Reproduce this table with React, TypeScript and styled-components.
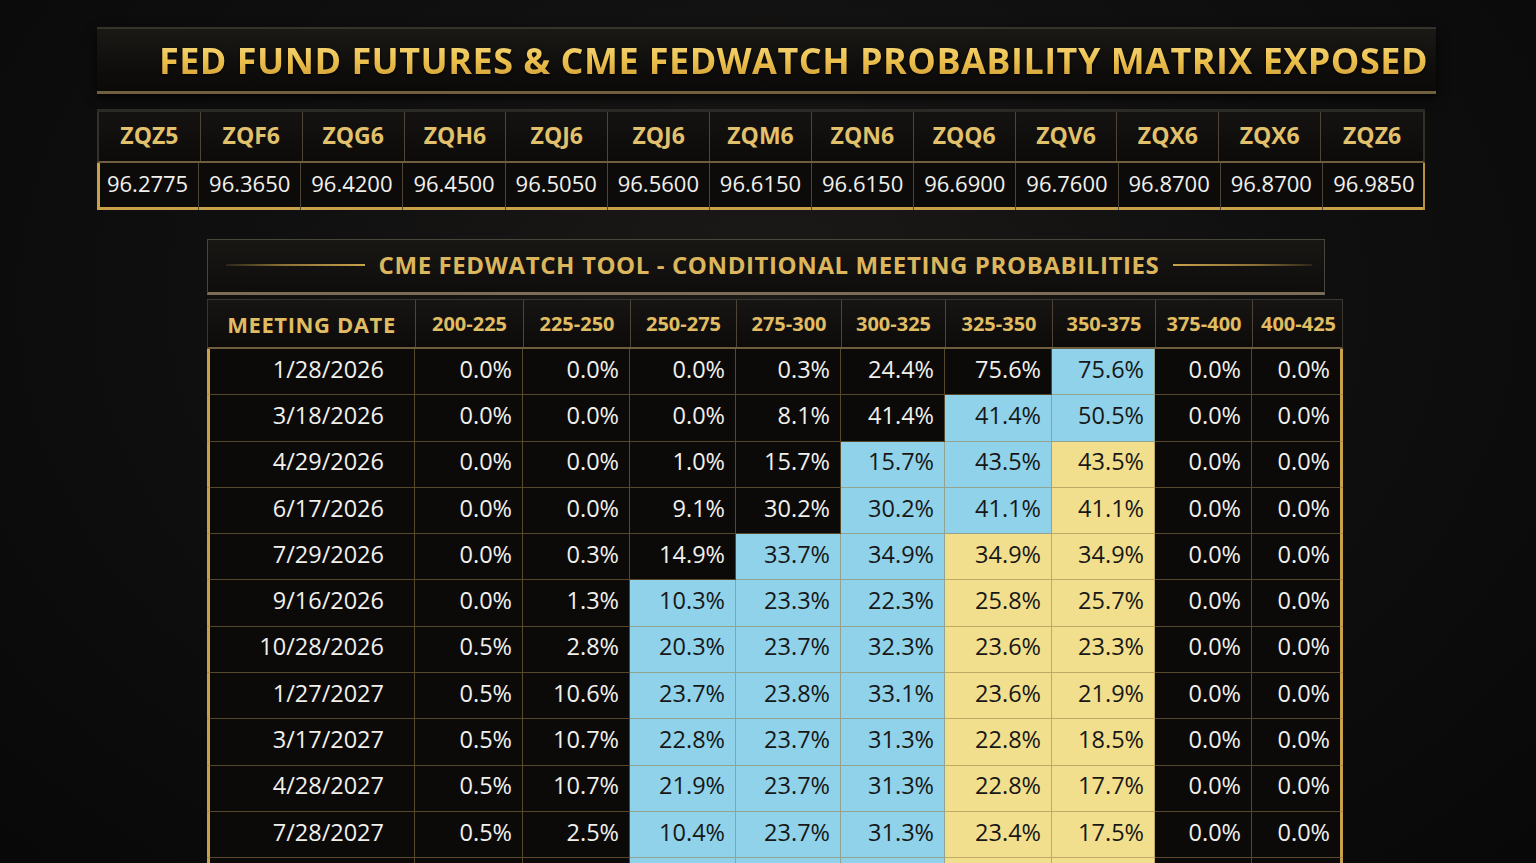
import styled, { createGlobalStyle } from 'styled-components';

const futures = [
  ['ZQZ5', '96.2775'],
  ['ZQF6', '96.3650'],
  ['ZQG6', '96.4200'],
  ['ZQH6', '96.4500'],
  ['ZQJ6', '96.5050'],
  ['ZQJ6', '96.5600'],
  ['ZQM6', '96.6150'],
  ['ZQN6', '96.6150'],
  ['ZQQ6', '96.6900'],
  ['ZQV6', '96.7600'],
  ['ZQX6', '96.8700'],
  ['ZQX6', '96.8700'],
  ['ZQZ6', '96.9850'],
];

const ranges = [
  '200-225',
  '225-250',
  '250-275',
  '275-300',
  '300-325',
  '325-350',
  '350-375',
  '375-400',
  '400-425',
];

type Tone = '' | 'b' | 'y';

// each row: date, values, and the highlight of each range column
const meetings: { date: string; values: string[]; tones: Tone[] }[] = [
  {
    date: '1/28/2026',
    values: ['0.0', '0.0', '0.0', '0.3', '24.4', '75.6', '75.6', '0.0', '0.0'],
    tones: ['', '', '', '', '', '', 'b', '', ''],
  },
  {
    date: '3/18/2026',
    values: ['0.0', '0.0', '0.0', '8.1', '41.4', '41.4', '50.5', '0.0', '0.0'],
    tones: ['', '', '', '', '', 'b', 'b', '', ''],
  },
  {
    date: '4/29/2026',
    values: ['0.0', '0.0', '1.0', '15.7', '15.7', '43.5', '43.5', '0.0', '0.0'],
    tones: ['', '', '', '', 'b', 'b', 'y', '', ''],
  },
  {
    date: '6/17/2026',
    values: ['0.0', '0.0', '9.1', '30.2', '30.2', '41.1', '41.1', '0.0', '0.0'],
    tones: ['', '', '', '', 'b', 'b', 'y', '', ''],
  },
  {
    date: '7/29/2026',
    values: ['0.0', '0.3', '14.9', '33.7', '34.9', '34.9', '34.9', '0.0', '0.0'],
    tones: ['', '', '', 'b', 'b', 'y', 'y', '', ''],
  },
  {
    date: '9/16/2026',
    values: ['0.0', '1.3', '10.3', '23.3', '22.3', '25.8', '25.7', '0.0', '0.0'],
    tones: ['', '', 'b', 'b', 'b', 'y', 'y', '', ''],
  },
  {
    date: '10/28/2026',
    values: ['0.5', '2.8', '20.3', '23.7', '32.3', '23.6', '23.3', '0.0', '0.0'],
    tones: ['', '', 'b', 'b', 'b', 'y', 'y', '', ''],
  },
  {
    date: '1/27/2027',
    values: ['0.5', '10.6', '23.7', '23.8', '33.1', '23.6', '21.9', '0.0', '0.0'],
    tones: ['', '', 'b', 'b', 'b', 'y', 'y', '', ''],
  },
  {
    date: '3/17/2027',
    values: ['0.5', '10.7', '22.8', '23.7', '31.3', '22.8', '18.5', '0.0', '0.0'],
    tones: ['', '', 'b', 'b', 'b', 'y', 'y', '', ''],
  },
  {
    date: '4/28/2027',
    values: ['0.5', '10.7', '21.9', '23.7', '31.3', '22.8', '17.7', '0.0', '0.0'],
    tones: ['', '', 'b', 'b', 'b', 'y', 'y', '', ''],
  },
  {
    date: '7/28/2027',
    values: ['0.5', '2.5', '10.4', '23.7', '31.3', '23.4', '17.5', '0.0', '0.0'],
    tones: ['', '', 'b', 'b', 'b', 'y', 'y', '', ''],
  },
];

const App = () => {
  return (
    <>
      <GlobalStyle />
      <Page>
        <TitleBanner>
          <Title>FED FUND FUTURES &amp; CME FEDWATCH PROBABILITY MATRIX EXPOSED</Title>
        </TitleBanner>

        <FuturesTable>
          <FuturesRow>
            {futures.map(([sym], i) => (
              <SymbolCell key={i}>{sym}</SymbolCell>
            ))}
          </FuturesRow>
          <PriceRow>
            {futures.map(([sym, price], i) => (
              <PriceCell key={sym + i}>{price}</PriceCell>
            ))}
          </PriceRow>
        </FuturesTable>

        <SubBanner>
          <Rule />
          <SubTitle>CME FEDWATCH TOOL - CONDITIONAL MEETING PROBABILITIES</SubTitle>
          <Rule $flip />
        </SubBanner>

        <Matrix>
          <MatrixHead>
            <HeadCell $first>MEETING DATE</HeadCell>
            {ranges.map((r) => (
              <HeadCell key={r}>{r}</HeadCell>
            ))}
          </MatrixHead>
          <MatrixBody>
            {meetings.map((m) => (
              <MatrixRow key={m.date}>
                <DateCell>{m.date}</DateCell>
                {m.values.map((v, i) => (
                  <ProbCell key={i} $tone={m.tones[i]}>
                    {v}%
                  </ProbCell>
                ))}
              </MatrixRow>
            ))}
            {/* next meeting row, only its top edge is in view */}
            <MatrixRow>
              <DateCell />
              {meetings[10].tones.map((t, i) => (
                <ProbCell key={i} $tone={t} />
              ))}
            </MatrixRow>
          </MatrixBody>
        </Matrix>
      </Page>
    </>
  );
};

export default App;

const GlobalStyle = createGlobalStyle`
  html, body {
    margin: 0;
    height: 100%;
    overflow: hidden;
  }
  body {
    background-color: #0d0c0b;
    background-image:
      radial-gradient(ellipse at 50% 35%, #1b1a18 0%, #111010 45%, #080808 100%);
    font-family: "Open Sans", "Liberation Sans", sans-serif;
  }
`;

const Page = styled.div`
  display: flex;
  flex-direction: column;
  align-items: flex-start;
  padding-top: 27px;
`;

const TitleBanner = styled.div`
  margin-left: 97px;
  width: 1339px;
  height: 67px;
  box-sizing: border-box;
  display: flex;
  align-items: center;
  padding-left: 62px;
  background: linear-gradient(180deg, #1a1916 0%, #0f0e0c 60%, #0b0a09 100%);
  border-top: 2px solid #36332d;
  border-bottom: 3px solid #6f5f3f;
  box-shadow: 0 4px 10px rgba(0, 0, 0, 0.8);
`;

const Title = styled.h1`
  margin: 0;
  font-family: "Open Sans", "Liberation Sans", sans-serif;
  font-weight: 700;
  font-size: 36px;
  letter-spacing: 0.47px;
  white-space: nowrap;
  background: linear-gradient(180deg, #f9e08a 0%, #ecc04d 50%, #c99530 100%);
  -webkit-background-clip: text;
  background-clip: text;
  color: transparent;
  filter: drop-shadow(0 1px 1px rgba(0, 0, 0, 0.9));
`;

const FuturesTable = styled.div`
  margin-left: 97px;
  margin-top: 15px;
  width: 1328px;
  border-top: 3px solid #2c2a26;
  background: #0c0b0a;
`;

const FuturesRow = styled.div`
  display: grid;
  grid-template-columns: repeat(13, 1fr);
  height: 49px;
  border-bottom: 2px solid #6e5e3e;
  border-left: 2px solid #34312b;
  border-right: 2px solid #34312b;
  background: linear-gradient(180deg, #141311 0%, #0c0b0a 100%);
`;

const SymbolCell = styled.div`
  display: flex;
  align-items: center;
  justify-content: center;
  padding-bottom: 4px;
  font-weight: 700;
  font-size: 23px;
  color: #e2c16c;
  border-right: 1px solid #4d4538;

  &:last-child {
    border-right: none;
  }
`;

const PriceRow = styled.div`
  display: grid;
  grid-template-columns: repeat(13, 1fr);
  height: 47px;
  box-shadow: inset 3px 0 0 #c9a14a, inset -2px 0 0 #b8933f, inset 0 -3px 0 #c9a14a;
`;

const PriceCell = styled.div`
  display: flex;
  align-items: center;
  justify-content: center;
  padding-bottom: 8px;
  font-size: 22px;
  color: #f1f0ec;
  border-right: 1px solid #4d4538;

  &:last-child {
    border-right: none;
  }
`;

const SubBanner = styled.div`
  margin-left: 207px;
  margin-top: 29px;
  width: 1118px;
  height: 56px;
  box-sizing: border-box;
  display: flex;
  align-items: center;
  gap: 14px;
  padding: 0 12px 3px 18px;
  background: linear-gradient(180deg, #181714 0%, #0e0d0c 100%);
  border: 1px solid #4a463e;
  border-bottom: 3px solid #7a6d55;
`;

const Rule = styled.div<{ $flip?: boolean }>`
  flex: 1;
  height: 2px;
  background: linear-gradient(
    ${(p) => (p.$flip ? '90deg' : '270deg')},
    #c9a24a 0%,
    #8a7038 60%,
    rgba(80, 65, 35, 0.4) 100%
  );
`;

const SubTitle = styled.h2`
  margin: 0;
  font-weight: 700;
  font-size: 24px;
  letter-spacing: 0.6px;
  white-space: nowrap;
  color: #dcb65c;
`;

const Matrix = styled.div`
  margin-left: 207px;
  margin-top: 4px;
  width: 1136px;
`;

const columns = '208px 108px 107px 106px 105px 104px 107px 103px 97px 91px';

const MatrixHead = styled.div`
  display: grid;
  grid-template-columns: ${columns};
  height: 50px;
  background: linear-gradient(180deg, #161513 0%, #0c0b0a 100%);
  border-top: 1px solid #3a3730;
  border-left: 1px solid #3a3730;
  border-right: 1px solid #3a3730;
  box-sizing: border-box;
  border-bottom: 2px solid #6e5e3e;
`;

const HeadCell = styled.div<{ $first?: boolean }>`
  display: flex;
  align-items: center;
  justify-content: center;
  font-weight: 700;
  font-size: ${(p) => (p.$first ? '22px' : '20px')};
  letter-spacing: ${(p) => (p.$first ? '0.6px' : '0')};
  color: #e0bd62;
  border-right: 1px solid #4d4538;

  &:last-child {
    border-right: none;
  }
`;

const MatrixBody = styled.div`
  background: #0b0a09;
  box-shadow: inset 3px 0 0 #c9a14a, inset -3px 0 0 #c9a14a;
`;

const MatrixRow = styled.div`
  display: grid;
  grid-template-columns: ${columns};
  height: 46.3px;
`;

const cellBase = `
  display: flex;
  align-items: center;
  justify-content: flex-end;
  box-sizing: border-box;
  padding-bottom: 6px;
  font-size: 23.5px;
  border-right: 1px solid rgba(150, 124, 70, 0.55);
  border-bottom: 1px solid rgba(150, 124, 70, 0.55);
`;

const DateCell = styled.div`
  ${cellBase}
  padding-right: 30px;
  color: #f1f0ec;
`;

const toneBg: Record<Tone, string> = {
  '': 'transparent',
  b: '#8fd2ea',
  y: '#f1df8d',
};

const ProbCell = styled.div<{ $tone: Tone }>`
  ${cellBase}
  padding-right: 10px;
  background: ${(p) => toneBg[p.$tone]};
  color: ${(p) => (p.$tone ? '#171717' : '#f1f0ec')};

  &:last-child {
    border-right: none;
    padding-right: 13px;
  }
`;
